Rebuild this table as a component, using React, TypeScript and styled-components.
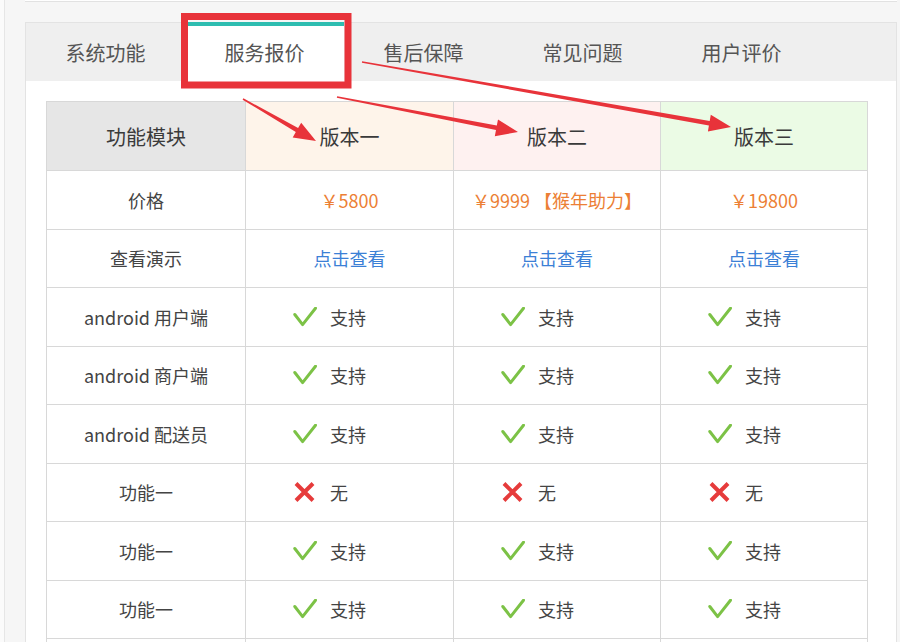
import React from "react";
import styled, { createGlobalStyle } from "styled-components";

const Global = createGlobalStyle`
  html, body { margin: 0; padding: 0; }
  body {
    background: #fbfbfb;
    font-family: "Noto Sans CJK SC", "Noto Sans", sans-serif;
    overflow: hidden;
  }
`;

const Page = styled.div`
  position: relative;
  width: 900px;
  height: 642px;
  padding-left: 4px;
  box-sizing: border-box;
  overflow: hidden;
`;

const Shell = styled.div`
  height: 642px;
  background: #f6f6f6;
  border-left: 1px solid #e6e6e6;
  padding-left: 20px;
  box-sizing: border-box;
`;

const TopCard = styled.div`
  width: 872px;
  height: 1px;
  background: #fff;
  border-bottom: 1px solid #e2e2e2;
  box-sizing: content-box;
  margin-bottom: 20px;
`;

const Panel = styled.div`
  width: 872px;
  box-sizing: border-box;
  border-left: 1px solid #e3e3e3;
  border-right: 1px solid #e3e3e3;
  background: #fff;
  height: 700px;
`;

const TabBar = styled.div`
  display: flex;
  height: 59px;
  box-sizing: border-box;
  background: #efefef;
  border-top: 1px solid #e3e3e3;
`;

const Tab = styled.div<{ $active?: boolean }>`
  width: 159px;
  display: flex;
  align-items: center;
  justify-content: center;
  font-size: 20px;
  color: #555;
  box-sizing: border-box;
  margin-top: ${(p) => (p.$active ? "-1px" : "0")};
  background: ${(p) => (p.$active ? "#fff" : "transparent")};
  border-top: ${(p) => (p.$active ? "4px solid #2dbdb0" : "none")};
  padding-bottom: ${(p) => (p.$active ? "2px" : "0")};
`;

const Content = styled.div`
  padding: 20px 0 0 20px;
`;

const Grid = styled.div`
  display: grid;
  grid-template-columns: 198px 207px 206px 206px;
  grid-template-rows: 68px repeat(9, 57.5px);
  gap: 1px;
  padding: 1px;
  background: #d8d8d8;
  width: max-content;
`;

const HeadCell = styled.div<{ $bg: string }>`
  background: ${(p) => p.$bg};
  display: flex;
  align-items: center;
  justify-content: center;
  font-size: 20px;
  color: #3a3a3a;
`;

const LabelCell = styled.div`
  background: #fff;
  display: flex;
  align-items: center;
  justify-content: center;
  font-size: 18px;
  color: #444;
`;

const PriceCell = styled(LabelCell)`
  color: #ec7f35;
`;

const LinkCell = styled(LabelCell)`
  color: #3b80d6;
`;

const FeatureCell = styled.div`
  background: #fff;
  display: flex;
  align-items: center;
  padding-left: 47px;
  gap: 13px;
  font-size: 18px;
  color: #444;
`;

const Overlay = styled.svg`
  position: absolute;
  top: 0;
  left: 0;
  pointer-events: none;
`;

const Check = () => (
  <svg width="24" height="20" viewBox="0 0 24 20">
    <path
      d="M1.8 7.5 L9.6 17.6 L22.5 1.2"
      fill="none"
      stroke="#7cc246"
      strokeWidth="3"
      strokeLinecap="round"
      strokeLinejoin="round"
    />
  </svg>
);

const Cross = () => (
  <svg width="24" height="20" viewBox="0 0 24 20">
    <path
      d="M3 1.5 L20 18.5 M20 1.5 L3 18.5"
      fill="none"
      stroke="#e63b3b"
      strokeWidth="4"
      strokeLinecap="butt"
    />
  </svg>
);

function arrow(x1: number, y1: number, x2: number, y2: number) {
  const w0 = 1.6, w1 = 4.6, L = 22, H = 17;
  const dx = x2 - x1, dy = y2 - y1;
  const len = Math.hypot(dx, dy);
  const ux = dx / len, uy = dy / len;
  const nx = -uy, ny = ux;
  const bx = x2 - ux * L, by = y2 - uy * L;
  const pts = [
    [x1 + (nx * w0) / 2, y1 + (ny * w0) / 2],
    [bx + (nx * w1) / 2, by + (ny * w1) / 2],
    [bx + (nx * H) / 2, by + (ny * H) / 2],
    [x2, y2],
    [bx - (nx * H) / 2, by - (ny * H) / 2],
    [bx - (nx * w1) / 2, by - (ny * w1) / 2],
    [x1 - (nx * w0) / 2, y1 - (ny * w0) / 2],
  ];
  return pts.map((p) => `${p[0].toFixed(1)},${p[1].toFixed(1)}`).join(" ");
}

type Mark = "yes" | "no";

const featureRows: { label: string; marks: Mark[] }[] = [
  { label: "android 用户端", marks: ["yes", "yes", "yes"] },
  { label: "android 商户端", marks: ["yes", "yes", "yes"] },
  { label: "android 配送员", marks: ["yes", "yes", "yes"] },
  { label: "功能一", marks: ["no", "no", "no"] },
  { label: "功能一", marks: ["yes", "yes", "yes"] },
  { label: "功能一", marks: ["yes", "yes", "yes"] },
];

const tabs = ["系统功能", "服务报价", "售后保障", "常见问题", "用户评价"];

export default function App() {
  return (
    <>
      <Global />
      <Page>
        <Shell>
          <TopCard />
          <Panel>
            <TabBar>
              {tabs.map((t, i) => (
                <Tab key={t} $active={i === 1}>
                  {t}
                </Tab>
              ))}
            </TabBar>
            <Content>
              <Grid>
                <HeadCell $bg="#e6e6e6">功能模块</HeadCell>
                <HeadCell $bg="#fef4ea">版本一</HeadCell>
                <HeadCell $bg="#fef1f0">版本二</HeadCell>
                <HeadCell $bg="#ebfbe5">版本三</HeadCell>

                <LabelCell>价格</LabelCell>
                <PriceCell>￥5800</PriceCell>
                <PriceCell>￥9999 【猴年助力】</PriceCell>
                <PriceCell>￥19800</PriceCell>

                <LabelCell>查看演示</LabelCell>
                <LinkCell>点击查看</LinkCell>
                <LinkCell>点击查看</LinkCell>
                <LinkCell>点击查看</LinkCell>

                {featureRows.map((r, ri) => (
                  <React.Fragment key={ri}>
                    <LabelCell>{r.label}</LabelCell>
                    {r.marks.map((m, mi) => (
                      <FeatureCell key={mi}>
                        {m === "yes" ? <Check /> : <Cross />}
                        <span>{m === "yes" ? "支持" : "无"}</span>
                      </FeatureCell>
                    ))}
                  </React.Fragment>
                ))}

                <LabelCell />
                <FeatureCell />
                <FeatureCell />
                <FeatureCell />
              </Grid>
            </Content>
          </Panel>
        </Shell>
        <Overlay width="900" height="642" viewBox="0 0 900 642">
          <rect
            x="184.5"
            y="16.5"
            width="163.5"
            height="68.5"
            fill="none"
            stroke="#e8333a"
            strokeWidth="7"
          />
          <polygon points={arrow(243, 99, 316, 141)} fill="#e8333a" />
          <polygon points={arrow(337, 97, 518, 132)} fill="#e8333a" />
          <polygon points={arrow(362, 62, 731, 127)} fill="#e8333a" />
        </Overlay>
      </Page>
    </>
  );
}
